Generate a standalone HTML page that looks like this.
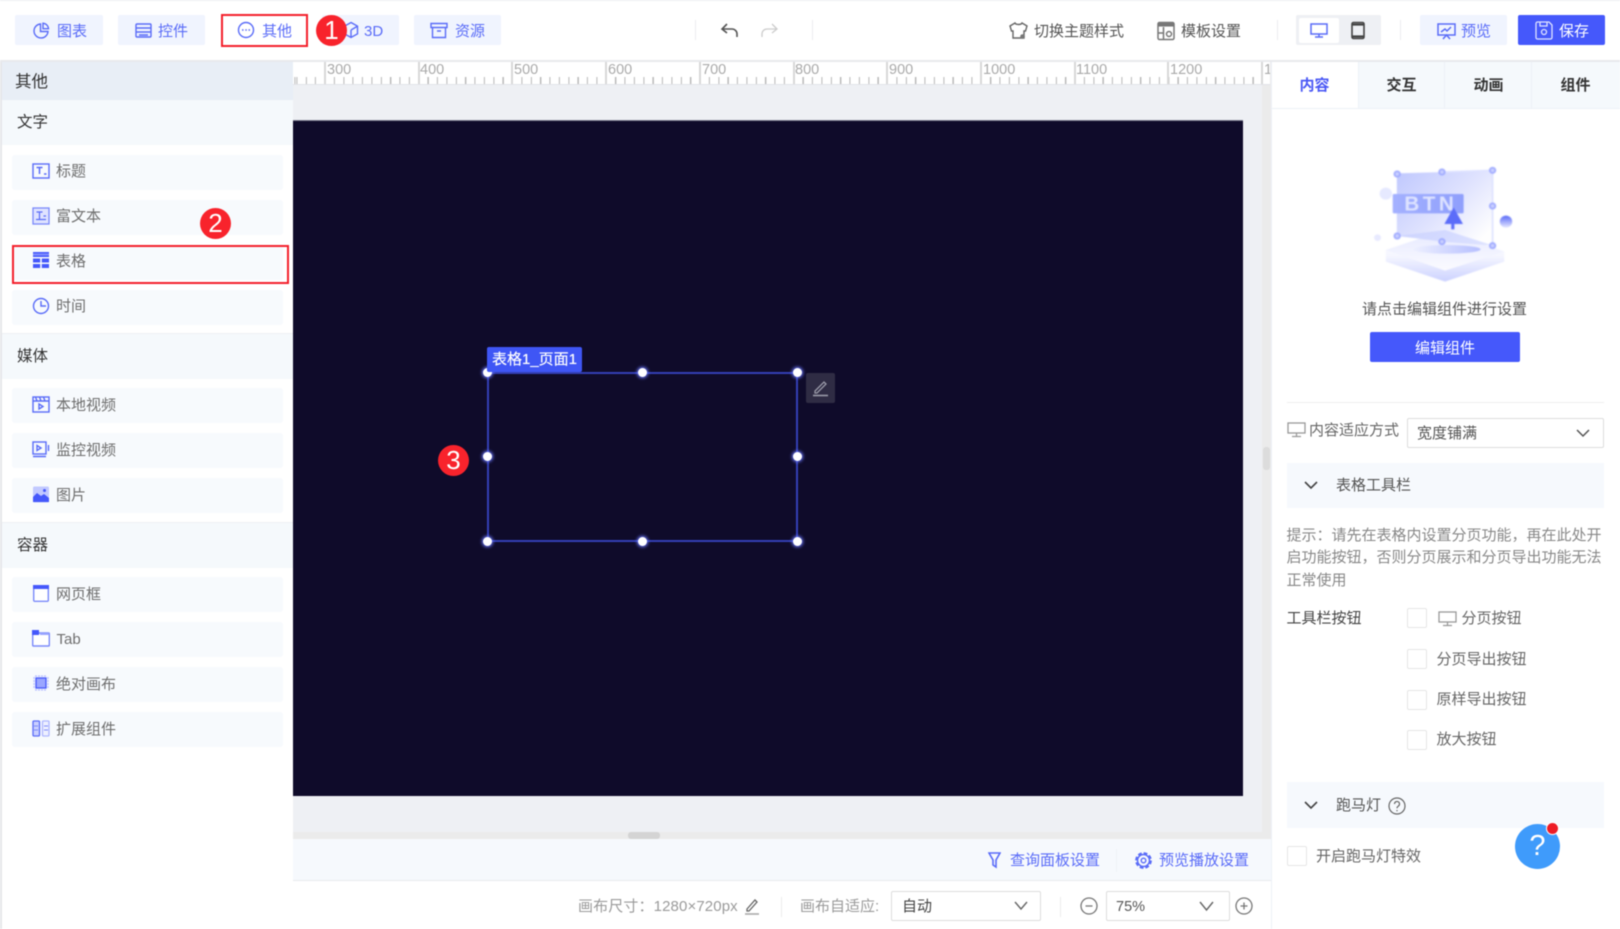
<!DOCTYPE html>
<html lang="zh"><head><meta charset="utf-8"><title>表格</title>
<style>
html,body{margin:0;padding:0;background:#fff}
#r{position:relative;width:1620px;height:929px;overflow:hidden;background:#fff;font-family:"Liberation Sans","Noto Sans CJK SC",sans-serif;font-size:15px;color:#555;filter:blur(.45px)}
#r div,#r svg{position:absolute;box-sizing:border-box}
.t{white-space:nowrap;line-height:20px;height:20px;transform:translateY(1px)}
.b{height:30px;top:15px;background:#f0f4fe;border-radius:2px}
.bl{color:#5a6cf8}
.it{left:12px;width:271px;height:35px;background:#f7fafd;border-radius:3px}
.sec{left:2px;width:291px;background:#f5f9fc}
.itx{left:56px;color:#6e6e6e}
.sh{left:17px;color:#333;font-size:15.5px}
.ic{fill:none;stroke:#5a6cf8;stroke-width:1.4}
.d{background:#ececf0;width:1px;height:20px;top:20px}
.cb{width:20px;height:20px;border:1.5px solid #e6e6e6;border-radius:2px;background:#fff}
.c{width:31px;height:31px;border-radius:50%;background:#f8232c;color:#fff;text-align:center;line-height:31px;font-size:26px}
.h{width:9px;height:9px;background:#fff;border-radius:50%;box-shadow:0 0 3px 1px #6b78ff}
.rl{top:61px;width:1.5px;height:23px;background:#d8d8d8}
.rn{top:62px;color:#aaa;font-size:14.5px;line-height:16px;height:16px;white-space:nowrap}
</style></head><body><div id="r">

<!-- ruler + workspace -->
<div style="left:293px;top:85px;width:969px;height:754px;background:#eef0f4"></div>
<div style="left:1262px;top:61px;width:9px;height:778px;background:#ebebeb"></div>
<div style="left:1263px;top:447px;width:7px;height:23px;background:#dcdcdc;border-radius:3px"></div>
<div style="left:293px;top:832px;width:969px;height:7px;background:#ebebeb"></div>
<div style="left:628px;top:832px;width:32px;height:7px;background:#d4d4d4;border-radius:3px"></div>
<div style="left:293px;top:61px;width:977px;height:24px;background:#fff;border-bottom:1px solid #e2e3e8"></div>
<div style="left:293px;top:77px;width:977px;height:7px;background:repeating-linear-gradient(90deg,#b8b8b8 0 1px,transparent 1px 9.375px);background-position:3.4px 0"></div>
<div class="rl" style="left:324px"></div><div class="rn" style="left:327px">300</div>
<div class="rl" style="left:418px"></div><div class="rn" style="left:420px">400</div>
<div class="rl" style="left:511px"></div><div class="rn" style="left:514px">500</div>
<div class="rl" style="left:605px"></div><div class="rn" style="left:608px">600</div>
<div class="rl" style="left:699px"></div><div class="rn" style="left:702px">700</div>
<div class="rl" style="left:793px"></div><div class="rn" style="left:795px">800</div>
<div class="rl" style="left:886px"></div><div class="rn" style="left:889px">900</div>
<div class="rl" style="left:980px"></div><div class="rn" style="left:983px">1000</div>
<div class="rl" style="left:1074px"></div><div class="rn" style="left:1076px">1100</div>
<div class="rl" style="left:1167px"></div><div class="rn" style="left:1170px">1200</div>
<div class="rl" style="left:1261px"></div><div class="rn" style="left:1264px;width:6px;overflow:hidden">1300</div>

<!-- canvas -->
<div style="left:293px;top:120px;width:950px;height:676px;background:#0f0b2a;border-top:1px solid #77778a"></div>
<div style="left:487px;top:372px;width:311px;height:170px;border:2px solid #333fb5"></div>
<div class="h" style="left:483px;top:368px"></div><div class="h" style="left:638px;top:368px"></div><div class="h" style="left:793px;top:368px"></div>
<div class="h" style="left:483px;top:452px"></div><div class="h" style="left:793px;top:452px"></div>
<div class="h" style="left:483px;top:537px"></div><div class="h" style="left:638px;top:537px"></div><div class="h" style="left:793px;top:537px"></div>
<div class="t" style="transform:none;left:487px;top:347px;width:95px;height:25px;line-height:25px;background:#3f56f5;color:#fff;border-radius:2px;padding-left:5px;font-size:15px;text-shadow:0 0 .5px #fff">表格1_页面1</div>
<div style="left:806px;top:373px;width:29px;height:30px;background:#2f2c44;border-radius:2px"></div>
<svg style="left:811px;top:379px" width="19" height="18" viewBox="0 0 19 18" fill="none" stroke="#9a9aa8" stroke-width="1.3"><path d="M4 12L13 3l2 2-9 9H4z"/><path d="M2 16.5h15" stroke-width="1.6"/></svg>
<div class="c" style="left:438px;top:445px">3</div>

<!-- bottom bars -->
<div style="left:293px;top:839px;width:978px;height:42px;background:#f6f9fd;border-bottom:1px solid #e8eaee"></div>
<svg style="left:988px;top:851px" width="13" height="18" viewBox="0 0 13 18" fill="none" stroke="#5a6cf8" stroke-width="1.6"><path d="M1 2h11L8 9v7l-3-2V9z"/></svg>
<div class="t bl" style="left:1010px;top:850px">查询面板设置</div>
<div style="left:1116px;top:849px;width:1px;height:23px;background:#eff2f6"></div>
<svg style="left:1134px;top:851px" width="19" height="19" viewBox="0 0 19 19" fill="none" stroke="#5a6cf8"><circle cx="9.5" cy="9.5" r="6" stroke-width="1.5"/><circle cx="9.5" cy="9.500" r="7.400" stroke-width="2" stroke-dasharray="3.800 2"/><circle cx="9.500" cy="9.500" r="2.300" stroke-width="1.400"/></svg>
<div class="t bl" style="left:1159px;top:850px">预览播放设置</div>
<div class="t" style="left:578px;top:896px;color:#9a9a9a;font-size:15px;letter-spacing:.12px">画布尺寸：1280×720px</div>
<svg style="left:743px;top:897px" width="18" height="19" viewBox="0 0 18 19" fill="none" stroke="#666" stroke-width="1.3"><path d="M4 12L12 3l2 2-8 9H4z"/><path d="M2 17h14" stroke="#aaa" stroke-width="1.6"/></svg>
<div style="left:781px;top:897px;width:1px;height:20px;background:#ececec"></div>
<div class="t" style="left:800px;top:896px;color:#9a9a9a;font-size:15px">画布自适应:</div>
<div style="left:891px;top:891px;width:150px;height:30px;border:1px solid #ddd;border-radius:2px;background:#fff"></div>
<div class="t" style="left:902px;top:896px;color:#444">自动</div>
<svg style="left:1013px;top:900px" width="16" height="12" viewBox="0 0 16 12" fill="none" stroke="#666" stroke-width="1.4"><path d="M2 2l6 7 6-7"/></svg>
<div style="left:1060px;top:897px;width:1px;height:20px;background:#ececec"></div>
<svg style="left:1079px;top:896px" width="20" height="20" viewBox="0 0 20 20" fill="none" stroke="#777" stroke-width="1.3"><circle cx="10" cy="10" r="8"/><path d="M6.500 10h7"/></svg>
<div style="left:1106px;top:891px;width:124px;height:30px;border:1px solid #ddd;border-radius:2px;background:#fff"></div>
<div class="t" style="left:1116px;top:896px;color:#555;font-size:14.500px">75%</div>
<svg style="left:1198px;top:900px" width="17" height="13" viewBox="0 0 17 13" fill="none" stroke="#666" stroke-width="1.4"><path d="M2 2l6.500 8L15 2"/></svg>
<svg style="left:1234px;top:896px" width="20" height="20" viewBox="0 0 20 20" fill="none" stroke="#777" stroke-width="1.300"><circle cx="10" cy="10" r="8"/><path d="M6.500 10h7M10 6.500v7"/></svg>

<!-- top bar -->
<div style="left:0;top:0;width:1620px;height:1px;background:#eceef2"></div>
<div style="left:0;top:60px;width:1620px;height:2px;background:#e8e9ed"></div>
<div class="b" style="left:15px;width:88px"></div>
<svg style="left:32px;top:21px" width="19" height="19" viewBox="0 0 19 19"><path class="ic" d="M8.500 3a7 7 0 1 0 7.500 7.500H8.500z"/><path class="ic" d="M11 2.200a6 6 0 0 1 5.500 5.500H11z"/></svg>
<div class="t bl" style="left:57px;top:21px">图表</div>
<div class="b" style="left:118px;width:87px"></div>
<svg style="left:135px;top:22px" width="17" height="17" viewBox="0 0 17 17"><rect class="ic" x="1" y="2" width="15" height="13" rx="1"/><path class="ic" d="M1 6h15M1 10h15M4 13h9"/></svg>
<div class="t bl" style="left:158px;top:21px">控件</div>
<div class="b" style="left:222px;width:85px;background:#fff"></div>
<svg style="left:237px;top:21px" width="18" height="18" viewBox="0 0 18 18"><circle class="ic" cx="9" cy="9" r="7.500"/><path class="ic" d="M5 9h1.500M8.300 9h1.500M11.500 9H13"/></svg>
<div class="t bl" style="left:262px;top:21px">其他</div>
<div style="left:221px;top:14px;width:87px;height:33px;border:2px solid #f3212c"></div>
<div class="b" style="left:322px;width:77px"></div>
<svg style="left:343px;top:21px" width="16" height="18" viewBox="0 0 16 18"><path class="ic" d="M8 1.500l6.500 3.700v7.600L8 16.500l-6.500-3.700V5.200z"/><path class="ic" d="M8 9v7M8 9l6-3.500"/></svg>
<div class="t bl" style="left:364px;top:21px;font-size:15px">3D</div>
<div class="c" style="left:316px;top:15px">1</div>
<div class="b" style="left:414px;width:87px"></div>
<svg style="left:430px;top:22px" width="18" height="17" viewBox="0 0 18 17"><path class="ic" d="M1 1.500h16v4H1zM2.500 5.500v10h13v-10M7 9h4"/></svg>
<div class="t bl" style="left:455px;top:21px">资源</div>

<div class="d" style="left:695px"></div>
<svg style="left:720px;top:21px" width="19" height="18" viewBox="0 0 19 18" fill="none" stroke="#555" stroke-width="1.600"><path d="M7 3L2 8l5 4"/><path d="M2 8h10a5 5 0 0 1 5 5v3"/></svg>
<svg style="left:760px;top:21px" width="19" height="18" viewBox="0 0 19 18" fill="none" stroke="#ccc" stroke-width="1.300"><path d="M12 3l5 5-5 4"/><path d="M17 8H7a5 5 0 0 0-5 5v3"/></svg>
<div class="d" style="left:812px"></div>

<svg style="left:1009px;top:21px" width="19" height="20" viewBox="0 0 19 20" fill="none" stroke="#666" stroke-width="1.400"><path d="M6 2c1 2 6 2 7 0l5 3-1.500 5H15v7H4v-7H2.500L1 5z"/><circle cx="13.500" cy="15.500" r="2.300" fill="#777" stroke="none"/></svg>
<div class="t" style="left:1034px;top:21px">切换主题样式</div>
<svg style="left:1157px;top:21px" width="18" height="20" viewBox="0 0 18 20" fill="none" stroke="#777" stroke-width="1.500"><rect x="1" y="1.500" width="16" height="17" rx="1.500"/><path d="M1 3.800h16" stroke-width="3.500"/><path d="M6.500 6v12.500M1 12h5.500"/><circle cx="12" cy="13" r="2.500"/></svg>
<div class="t" style="left:1181px;top:21px">模板设置</div>
<div class="d" style="left:1277px"></div>
<div style="left:1296px;top:15px;width:85px;height:30px;background:#eef0f4;border-radius:2px"></div>
<div style="left:1299px;top:18px;width:40px;height:25px;background:#fff;border-radius:2px"></div>
<svg style="left:1310px;top:23px" width="18" height="15" viewBox="0 0 18 15" fill="none" stroke="#5a6cf8" stroke-width="1.500"><rect x="1" y="1" width="16" height="10"/><path d="M9 11v3M5 14h8"/></svg>
<svg style="left:1350px;top:21px" width="16" height="19" viewBox="0 0 16 19" fill="none" stroke="#444" stroke-width="1.600"><rect x="2" y="1.500" width="12" height="16" rx="1.500"/><path d="M2 3.500h12M2 15.500h12" stroke-width="2.200"/></svg>
<div class="d" style="left:1400px"></div>
<div class="b" style="left:1420px;width:87px"></div>
<svg style="left:1437px;top:22px" width="19" height="18" viewBox="0 0 19 18" fill="none" stroke="#5a6cf8" stroke-width="1.500"><rect x="1" y="2" width="17" height="11"/><path d="M4 10l4-3 2 2 4-4M6 17l3.500-4 3.500 4"/></svg>
<div class="t bl" style="left:1461px;top:21px">预览</div>
<div class="b" style="left:1518px;width:87px;background:#4558fb"></div>
<svg style="left:1535px;top:21px" width="18" height="19" viewBox="0 0 18 19" fill="none" stroke="#dfe3ff" stroke-width="1.300"><path d="M1 2.500A1.500 1.500 0 0 1 2.500 1H14l3 3v12.500a1.500 1.500 0 0 1-1.500 1.500h-13A1.500 1.500 0 0 1 1 16.500z"/><path d="M5 1v4h7V1"/><circle cx="9" cy="11" r="2.500"/></svg>
<div class="t" style="left:1559px;top:21px;color:#fff">保存</div>

<!-- left panel -->
<div style="left:0;top:62px;width:2px;height:867px;background:#e6e7ea"></div>
<div style="left:2px;top:62px;width:291px;height:867px;background:#fff"></div>
<div style="left:2px;top:62px;width:291px;height:38px;background:#e8eef6"></div>
<div class="t" style="left:15px;top:71px;color:#333;font-size:16.500px">其他</div>
<div class="sec" style="top:100px;height:45px"></div>
<div class="t sh" style="top:112px">文字</div>
<div class="it" style="top:155px"></div>
<svg style="left:32px;top:162px" width="18" height="18" viewBox="0 0 18 18"><rect class="ic" x="1" y="2" width="16" height="14"/><path d="M4.500 5.500h6M7.500 5.500V12M12 12h2.500" fill="none" stroke="#5a6cf8" stroke-width="1.500"/></svg>
<div class="t itx" style="top:161px">标题</div>
<div class="it" style="top:200px"></div>
<svg style="left:32px;top:207px" width="18" height="18" viewBox="0 0 18 18"><rect x="1" y="1" width="16" height="16" fill="#dfe3ff" stroke="#7b8afa" stroke-width="1.300"/><path d="M4.500 5h6M7.500 5v7M11.500 9H14M4 12.500h10" fill="none" stroke="#5a6cf8" stroke-width="1.200"/></svg>
<div class="t itx" style="top:206px">富文本</div>
<div class="it" style="top:245px"></div>
<svg style="left:33px;top:252px" width="16" height="16" viewBox="0 0 16 16"><rect width="16" height="5" fill="#4558fb"/><rect x="0" y="1.500" width="16" height="2" fill="#d5dbff" opacity=".4"/><rect y="6.500" width="7.200" height="4" fill="#4558fb"/><rect x="8.800" y="6.500" width="7.200" height="4" fill="#4558fb"/><rect y="12" width="7.200" height="4" fill="#4558fb"/><rect x="8.800" y="12" width="7.200" height="4" fill="#4558fb"/></svg>
<div class="t itx" style="top:251px">表格</div>
<div style="left:12px;top:245px;width:277px;height:39px;border:2px solid #f3212c"></div>
<div class="it" style="top:290px"></div>
<svg style="left:32px;top:297px" width="18" height="18" viewBox="0 0 18 18"><circle class="ic" cx="9" cy="9" r="7.500"/><path class="ic" d="M9 4v5h5"/></svg>
<div class="t itx" style="top:296px">时间</div>

<div class="sec" style="top:333px;height:46px;border-top:1px solid #eef0f3"></div>
<div class="t sh" style="top:346px">媒体</div>
<div class="it" style="top:388px"></div>
<svg style="left:32px;top:396px" width="18" height="17" viewBox="0 0 18 17"><rect class="ic" x="1" y="1" width="16" height="15"/><path class="ic" d="M1 5h16M3.500 1l1.500 4M7.500 1L9 5M11.500 1L13 5" stroke-width="1.200"/><path class="ic" d="M7 8l4 2.500L7 13z" stroke-width="1"/></svg>
<div class="t itx" style="top:395px">本地视频</div>
<div class="it" style="top:433px"></div>
<svg style="left:32px;top:441px" width="18" height="17" viewBox="0 0 18 17"><rect class="ic" x="1" y="1" width="13" height="12"/><path class="ic" d="M1 15.500h13M16.500 4v6" /><path class="ic" d="M5 4.500l4 2.500-4 2.500z" stroke-width="1"/></svg>
<div class="t itx" style="top:440px">监控视频</div>
<div class="it" style="top:478px"></div>
<svg style="left:33px;top:486px" width="16" height="17" viewBox="0 0 16 17"><rect width="16" height="16" y=".5" rx="1.500" fill="#c2c9ff"/><path d="M0 11l4-4 4 3 3-2 5 4v4H0z" fill="#4558fb"/><circle cx="11.500" cy="4.500" r="1.500" fill="#4558fb"/></svg>
<div class="t itx" style="top:485px">图片</div>

<div class="sec" style="top:522px;height:46px;border-top:1px solid #eef0f3"></div>
<div class="t sh" style="top:535px">容器</div>
<div class="it" style="top:577px"></div>
<svg style="left:33px;top:585px" width="16" height="17" viewBox="0 0 16 17"><rect x=".7" y=".7" width="14.600" height="15.600" rx="1" fill="#fff" stroke="#7b8afa" stroke-width="1.400"/><rect x="0" y="0" width="16" height="4" fill="#4558fb"/></svg>
<div class="t itx" style="top:584px">网页框</div>
<div class="it" style="top:622px"></div>
<svg style="left:32px;top:630px" width="18" height="17" viewBox="0 0 18 17"><rect x=".7" y="3" width="16.600" height="13" rx=".8" fill="#fff" stroke="#7b8afa" stroke-width="1.400"/><rect x="0" y="0" width="7" height="5" fill="#4558fb"/><rect x="8" y="3" width="9" height="2" fill="#9aa6ff"/></svg>
<div class="t" style="left:56.500px;top:629px;color:#6e6e6e;font-size:15px">Tab</div>
<div class="it" style="top:667px"></div>
<svg style="left:32px;top:674px" width="18" height="18" viewBox="0 0 18 18"><rect x="4" y="4" width="10" height="10" fill="#9aa6ff" stroke="#4558fb" stroke-width="1.300"/><path d="M2 3v12M16 3v12M3 2h12M3 16h12" fill="none" stroke="#b6beff" stroke-width="1.200" stroke-dasharray="2 1"/></svg>
<div class="t itx" style="top:674px">绝对画布</div>
<div class="it" style="top:712px"></div>
<svg style="left:32px;top:720px" width="18" height="17" viewBox="0 0 18 17"><rect x="1" y="1" width="6.500" height="15" rx="1" fill="#c9cfff" stroke="#5a6cf8" stroke-width="1.300"/><rect x="10.500" y="1" width="6.500" height="15" rx="1" fill="#eef0ff" stroke="#aeb7ff" stroke-width="1.300"/><path d="M2 6h4M12 6h4M2 10h4M12 10h4" stroke="#7b8afa" fill="none"/></svg>
<div class="t itx" style="top:719px">扩展组件</div>
<div class="c" style="left:200px;top:208px">2</div>

<!-- right panel -->
<div style="left:1271px;top:62px;width:349px;height:867px;background:#fff;border-left:1px solid #edf1f7"></div>
<div style="left:1358px;top:62px;width:262px;height:46px;background:#f5f9fc"></div>
<div style="left:1271px;top:108px;width:349px;height:1px;background:#edf1f7"></div>
<div style="left:1358px;top:62px;width:1px;height:46px;background:#edf1f7"></div>
<div style="left:1444px;top:62px;width:1px;height:46px;background:#edf1f7"></div>
<div style="left:1531px;top:62px;width:1px;height:46px;background:#edf1f7"></div>
<div class="t" style="left:1271px;width:87px;text-align:center;top:75px;color:#4a58f5;font-weight:bold">内容</div>
<div class="t" style="left:1358px;width:87px;text-align:center;top:75px;color:#333;font-weight:bold">交互</div>
<div class="t" style="left:1445px;width:87px;text-align:center;top:75px;color:#333;font-weight:bold">动画</div>
<div class="t" style="left:1532px;width:87px;text-align:center;top:75px;color:#333;font-weight:bold">组件</div>

<svg style="left:1080px;top:0;filter:blur(.5px)" width="540" height="310" viewBox="0 0 1568 930" preserveAspectRatio="none">
<defs>
<linearGradient id="g1" x1="0" y1="0" x2="1" y2=".8"><stop offset="0" stop-color="#b4beff"/><stop offset=".55" stop-color="#dadeff"/><stop offset="1" stop-color="#fff"/></linearGradient>
<linearGradient id="g2" x1="0" y1="0" x2="0" y2="1"><stop offset="0" stop-color="#fff"/><stop offset=".5" stop-color="#f5f6ff"/><stop offset="1" stop-color="#ccd2ff"/></linearGradient>
<linearGradient id="g3" x1="0" y1="0" x2="0" y2="1"><stop offset="0" stop-color="#5a6bf8"/><stop offset="1" stop-color="#e6e8ff"/></linearGradient>
<linearGradient id="g4" x1="0" y1="0" x2="1" y2="0"><stop offset="0" stop-color="#a4b1ff"/><stop offset="1" stop-color="#8f9ffc"/></linearGradient>
<linearGradient id="g5" x1="0" y1="0" x2="0" y2="1"><stop offset="0" stop-color="#e6e9ff"/><stop offset="1" stop-color="#fbfbff"/></linearGradient>
<linearGradient id="g6" x1="0" y1="0" x2="1" y2="0"><stop offset="0" stop-color="#eef0ff"/><stop offset="1" stop-color="#b6bfff"/></linearGradient>
</defs>
<polygon points="888,750 1060,690 1232,755 1232,785 1060,845 888,785" fill="url(#g2)"/>
<polygon points="888,750 1060,690 1232,755 1060,812" fill="url(#g5)"/>
<ellipse cx="1065" cy="748" rx="98" ry="13" fill="url(#g6)"/>
<polygon points="920,520 1198,512 1198,736 920,708" fill="url(#g1)" opacity=".85"/>
<path d="M1050,516 L1198,511 L1198,736" fill="none" stroke="#dfe3ff" stroke-width="5"/>
<rect x="908" y="582" width="206" height="58" rx="4" fill="url(#g4)"/>
<text x="942" y="632" font-family="Liberation Sans" font-weight="bold" font-size="60" fill="#dfe4ff" letter-spacing="10">BTN</text>
<polygon points="1085,622 1112,672 1058,672" fill="#5b6cf9"/><rect x="1078" y="670" width="9" height="18" fill="#5b6cf9"/>
<polygon points="920,708 1060,690 1198,736 1050,725" fill="#c7cfff" opacity=".6"/>
<g fill="#c8ceff" stroke="#9ea9ff" stroke-width="5"><circle cx="921" cy="522" r="8"/><circle cx="1051" cy="516" r="8"/><circle cx="1198" cy="511" r="8"/><circle cx="1198" cy="618" r="8"/><circle cx="921" cy="708" r="8"/><circle cx="1051" cy="725" r="8"/><circle cx="1198" cy="737" r="8"/></g>
<circle cx="888" cy="581" r="18" fill="#e6e9ff"/><circle cx="1237" cy="665" r="18" fill="url(#g3)"/><circle cx="864" cy="713" r="10" fill="#e8eaff"/>
</svg>

<div class="t" style="left:1270px;width:349px;text-align:center;top:299px;color:#555">请点击编辑组件进行设置</div>
<div style="left:1370px;top:332px;width:150px;height:30px;line-height:33px;background:#4558fb;color:#fff;text-align:center;border-radius:2px">编辑组件</div>
<div style="left:1287px;top:402px;width:317px;height:1px;background:#eee"></div>
<svg style="left:1287px;top:422px" width="19" height="16" viewBox="0 0 19 16" fill="none" stroke="#999" stroke-width="1.300"><rect x="1" y="1" width="17" height="10"/><path d="M9.500 11v3M5 14.500h9"/></svg>
<div class="t" style="left:1309px;top:420px;color:#666">内容适应方式</div>
<div style="left:1407px;top:418px;width:197px;height:30px;border:1px solid #ddd;border-radius:2px;background:#fff"></div>
<div class="t" style="left:1417px;top:423px;color:#555">宽度铺满</div>
<svg style="left:1575px;top:428px" width="16" height="11" viewBox="0 0 16 11" fill="none" stroke="#555" stroke-width="1.500"><path d="M2 2l6 6 6-6"/></svg>

<div style="left:1287px;top:463px;width:317px;height:45px;background:#f6f9fd"></div>
<svg style="left:1303px;top:480px" width="16" height="10" viewBox="0 0 16 10" fill="none" stroke="#444" stroke-width="1.600"><path d="M2 2l6 6 6-6"/></svg>
<div class="t" style="left:1336px;top:475px;color:#555">表格工具栏</div>
<div class="t" style="left:1286.500px;top:525px;color:#888">提示：请先在表格内设置分页功能，再在此处开</div>
<div class="t" style="left:1286.500px;top:547px;color:#888">启功能按钮，否则分页展示和分页导出功能无法</div>
<div class="t" style="left:1286.500px;top:569.500px;color:#888">正常使用</div>
<div class="t" style="left:1286.500px;top:608px;color:#444">工具栏按钮</div>
<div class="cb" style="left:1407px;top:608px"></div>
<svg style="left:1438px;top:611px" width="19" height="16" viewBox="0 0 19 16" fill="none" stroke="#999" stroke-width="1.300"><rect x="1" y="1" width="17" height="10"/><path d="M9.500 11v3M5 14.500h9"/></svg>
<div class="t" style="left:1461.500px;top:608px;color:#666">分页按钮</div>
<div class="cb" style="left:1407px;top:649px"></div>
<div class="t" style="left:1436.500px;top:649px;color:#666">分页导出按钮</div>
<div class="cb" style="left:1407px;top:690px"></div>
<div class="t" style="left:1436.500px;top:689px;color:#666">原样导出按钮</div>
<div class="cb" style="left:1407px;top:730px"></div>
<div class="t" style="left:1436.500px;top:729px;color:#666">放大按钮</div>

<div style="left:1287px;top:782px;width:317px;height:46px;background:#f6f9fd"></div>
<svg style="left:1303px;top:800px" width="16" height="10" viewBox="0 0 16 10" fill="none" stroke="#444" stroke-width="1.600"><path d="M2 2l6 6 6-6"/></svg>
<div class="t" style="left:1336px;top:795px;color:#555">跑马灯</div>
<svg style="left:1388px;top:797px" width="18" height="18" viewBox="0 0 18 18" fill="none" stroke="#666" stroke-width="1.200"><circle cx="9" cy="9" r="8"/><path d="M6.500 7a2.500 2.500 0 1 1 3.800 2.100C9.300 9.800 9 10.300 9 11.300M9 13v1.200"/></svg>
<div class="cb" style="left:1287px;top:846px"></div>
<div class="t" style="left:1316px;top:846px;color:#666">开启跑马灯特效</div>
<div style="left:1515px;top:824px;width:45px;height:45px;border-radius:50%;background:#3f9bfb;color:#fff;text-align:center;line-height:45px;font-size:29px">?</div>
<div style="left:1546px;top:822px;width:13px;height:13px;border-radius:50%;background:#ee1c25;border:1.500px solid #fff"></div>
</div></body></html>
